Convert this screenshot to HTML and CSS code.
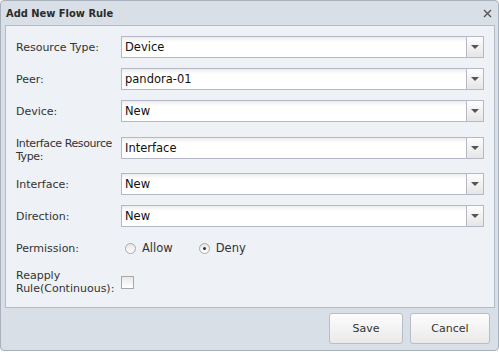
FILE: index.html
```html
<!DOCTYPE html>
<html lang="en">
<head>
	<meta charset="utf-8">
	<title>Add New Flow Rule</title>
	<link rel="stylesheet" href="styles.css">
</head>
<body>
   <div class="window" role="dialog">
       <div class="header">
           <span class="title">Add New Flow Rule</span>
           <svg class="close" width="9" height="9" viewBox="0 0 9 9">
               <path d="M1 1 L8 8 M8 1 L1 8" stroke="#555" stroke-width="1.4" fill="none"/>
           </svg>
       </div>

       <div class="panel">
           <div class="row">
               <label class="label">Resource Type:</label>
               <div class="combo"><span class="value">Device</span><span class="trigger"></span></div>
           </div>
           <div class="row">
               <label class="label">Peer:</label>
               <div class="combo"><span class="value">pandora-01</span><span class="trigger"></span></div>
           </div>
           <div class="row">
               <label class="label">Device:</label>
               <div class="combo"><span class="value">New</span><span class="trigger"></span></div>
           </div>
           <div class="row row-tall">
               <label class="label">Interface Resource<br>Type:</label>
               <div class="combo"><span class="value">Interface</span><span class="trigger"></span></div>
           </div>
           <div class="row">
               <label class="label">Interface:</label>
               <div class="combo"><span class="value">New</span><span class="trigger"></span></div>
           </div>
           <div class="row">
               <label class="label">Direction:</label>
               <div class="combo"><span class="value">New</span><span class="trigger"></span></div>
           </div>
           <div class="row">
               <label class="label">Permission:</label>
               <div class="radios">
                   <span class="radio"></span><span class="radio-text">Allow</span>
                   <span class="radio checked"></span><span class="radio-text">Deny</span>
               </div>
           </div>
           <div class="row row-check">
               <label class="label">Reapply<br>Rule(Continuous):</label>
               <span class="checkbox"></span>
           </div>
       </div>

       <div class="footer">
           <button class="btn btn-save">Save</button>
           <button class="btn btn-cancel">Cancel</button>
       </div>
   </div>
</body>
</html>
```

FILE: styles.css
```css
body {
	font-family: 'DejaVu Sans', sans-serif;
	font-size: 11px;
	color: #333;
	background-color: #fff;
	margin: 0;
	padding: 0;
}

.window {
	width: 499px;
	height: 351px;
	box-sizing: border-box;
	border: 1px solid #a9b1bd;
	border-radius: 4px;
	background-color: #d9dfe6;
	display: flex;
	flex-direction: column;
}

.header {
	height: 24px;
	display: flex;
	align-items: center;
	justify-content: space-between;
	padding: 0 6px 0 5px;
}

.title {
	font-family: 'DejaVu Sans Condensed', 'DejaVu Sans', sans-serif;
	font-weight: bold;
	font-size: 11px;
	color: #2b2b2b;
	padding-top: 1px;
}

.close {
	margin-top: 1px;
}

.panel {
	margin: 0 3px 0 4px;
	height: 283px;
	box-sizing: border-box;
	border: 1px solid #b3bbc7;
	background-color: #eef1f5;
	padding: 10px 10px 0 10px;
}

.row {
	display: flex;
	align-items: flex-start;
	margin-bottom: 10px;
}

.label {
	width: 105px;
	flex-shrink: 0;
	line-height: 13px;
	padding-top: 5px;
	white-space: nowrap;
}

.row-tall {
	margin-top: 15px;
}

.row-tall .label {
	padding-top: 0;
	letter-spacing: -0.4px;
}

.row-check {
	align-items: center;
}

.row-check .label {
	padding-top: 0;
}

.combo {
	flex: 1;
	height: 22px;
	box-sizing: border-box;
	border: 1px solid #b5b8c8;
	background: linear-gradient(#ececec, #fff 5px);
	display: flex;
	align-items: center;
}

.value {
	flex: 1;
	padding-left: 3px;
	color: #111;
	font-size: 11.5px;
}

.trigger {
	width: 16px;
	height: 100%;
	border-left: 1px solid #b5b8c8;
	background: linear-gradient(#fdfdfd, #e6e6e6);
	position: relative;
}

.trigger::after {
	content: '';
	position: absolute;
	left: 4px;
	top: 8px;
	border-left: 4px solid transparent;
	border-right: 4px solid transparent;
	border-top: 4px solid #555;
}

.radios {
	display: flex;
	align-items: center;
	height: 22px;
	padding-left: 4px;
}

.radio {
	width: 9px;
	height: 9px;
	border: 1px solid #a8a8a8;
	border-radius: 50%;
	background: linear-gradient(#e6e6e6, #fff);
	position: relative;
}

.radio.checked::after {
	content: '';
	position: absolute;
	left: 3px;
	top: 3px;
	width: 3px;
	height: 3px;
	border-radius: 50%;
	background-color: #333;
}

.radio-text {
	margin-left: 6px;
	margin-right: 26px;
	font-size: 11.5px;
}

.checkbox {
	width: 11px;
	height: 11px;
	border: 1px solid #a8a8a8;
	background: linear-gradient(#e9e9e9, #fff);
}

.footer {
	flex: 1;
	display: flex;
	justify-content: flex-end;
	align-items: flex-start;
	gap: 7px;
	padding: 5px 8px 0 0;
}

.btn {
	height: 31px;
	border: 1px solid #b9bec6;
	border-radius: 3px;
	background: linear-gradient(#fdfdfd, #e9e9e9);
	font-family: 'DejaVu Sans', sans-serif;
	font-size: 11px;
	color: #333;
	padding: 0;
}

.btn-save {
	width: 74px;
}

.btn-cancel {
	width: 80px;
}
```
